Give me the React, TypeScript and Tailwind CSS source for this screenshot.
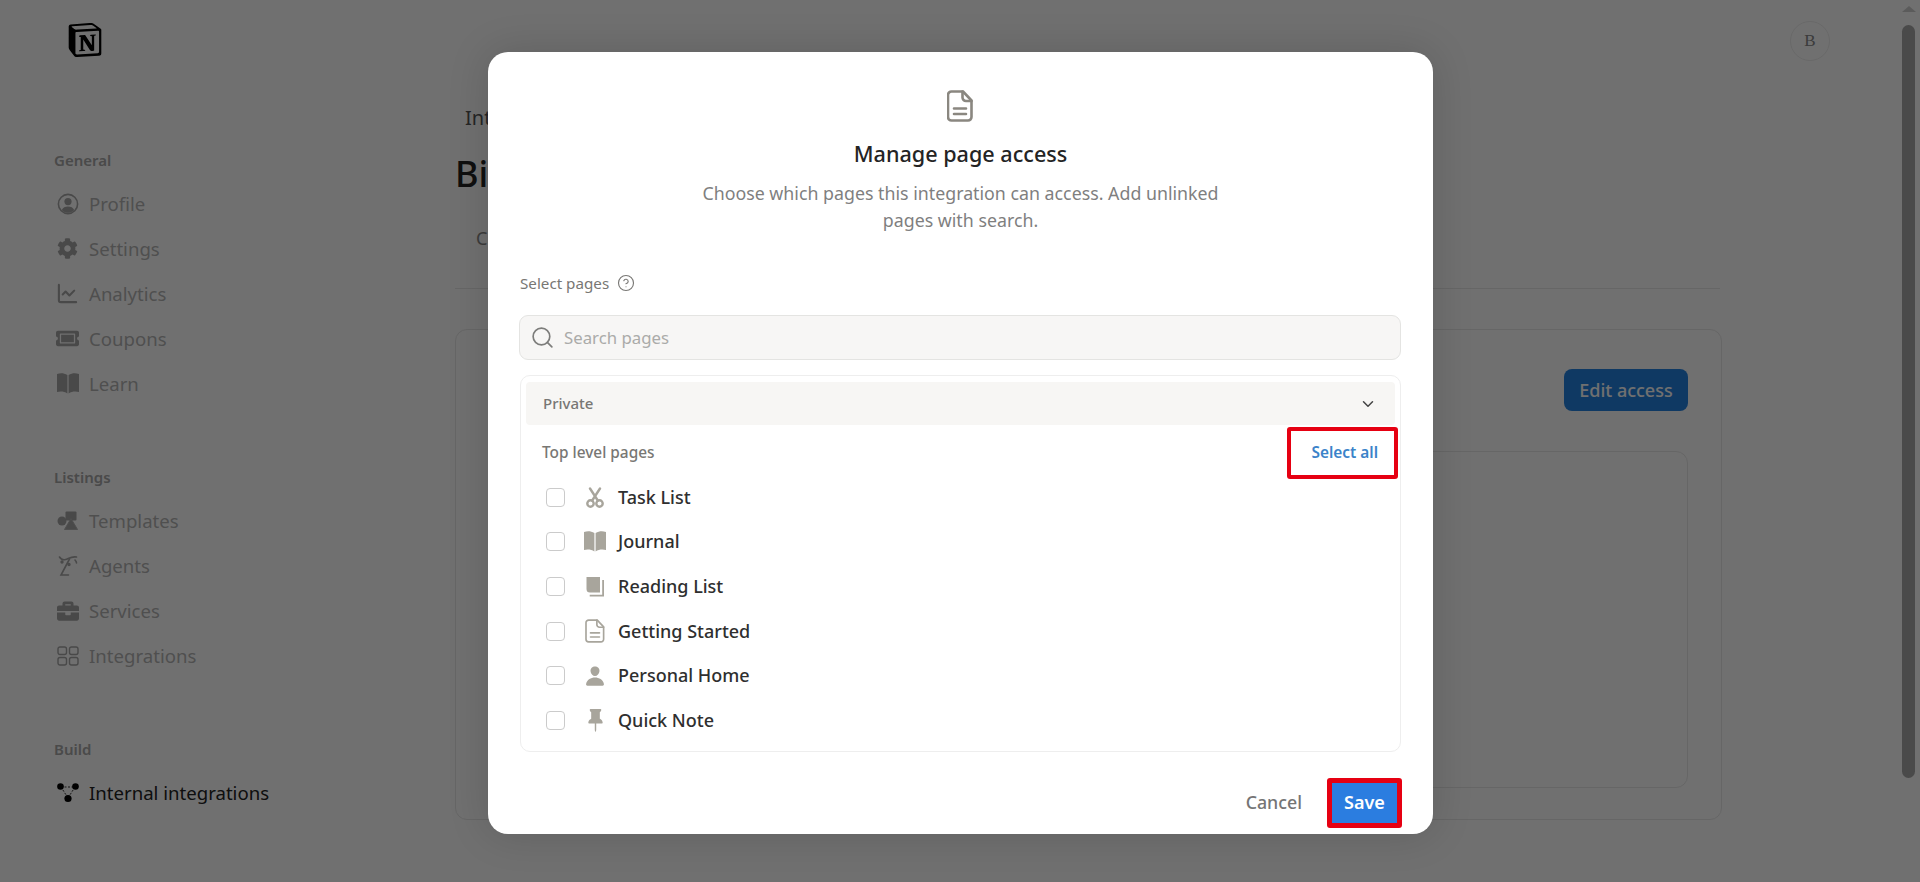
import React from 'react';
import { ChartLine, ChevronDown, CircleHelp, Search } from 'lucide-react';
import { FaBriefcase, FaCog, FaTicketAlt } from 'react-icons/fa';
import { IoPerson } from 'react-icons/io5';
import { BsPinFill } from 'react-icons/bs';
import { SiNotion } from 'react-icons/si';

function ProfileIcon() {
  return (
    <svg width="22" height="22" viewBox="0 0 22 22" fill="currentColor">
      <circle cx="11" cy="11" r="9.6" fill="none" stroke="currentColor" strokeWidth="1.6" />
      <circle cx="11" cy="8.6" r="3.6" />
      <path d="M4.8 17c1-2.6 3.4-3.6 6.2-3.6s5.200 1 6.200 3.600c-1.600 1.700-3.800 2.700-6.200 2.700s-4.600-1-6.200-2.700z" />
    </svg>
  );
}

function TemplatesIcon() {
  return (
    <svg width="22" height="22" viewBox="0 0 22 22" fill="currentColor">
      <circle cx="5" cy="11" r="4.500" />
      <rect x="8.500" y="1.500" width="11" height="9" rx="1" />
      <path d="M14 8.500 20.500 19.500h-13z" stroke="#b3b3b3" strokeWidth="1" />
    </svg>
  );
}

function AgentsIcon() {
  return (
    <svg width="22" height="24" viewBox="0 0 22 24" fill="none" stroke="currentColor" strokeWidth="1.600" strokeLinecap="round">
      <path d="M2.500 3c1.500 2.500 4 3 6 2.500 3-.8 6-3.500 11-2.500" />
      <path d="M12.500 5 4 21h7.500" />
      <circle cx="5" cy="8" r=".9" fill="currentColor" />
      <circle cx="12" cy="10.500" r=".9" fill="currentColor" />
      <path d="M18 6c1 1 1.500 2 1.500 3" />
    </svg>
  );
}

function IntegrationsIcon() {
  return (
    <svg width="22" height="20" viewBox="0 0 22 20" fill="none" stroke="currentColor" strokeWidth="1.400">
      <rect x="1" y="1" width="8.500" height="7.500" rx="2" />
      <rect x="12.500" y="1" width="8.500" height="7.500" rx="2" />
      <rect x="1" y="11.500" width="8.500" height="7.500" rx="2" />
      <rect x="12.500" y="11.500" width="8.500" height="7.500" rx="2" />
    </svg>
  );
}

function InternalIcon() {
  return (
    <svg width="22" height="20" viewBox="0 0 22 20" fill="currentColor">
      <path d="M4 4h14M4 4l7 11M18 4l-7 11" stroke="currentColor" strokeWidth=".8" strokeDasharray="2 1.500" />
      <circle cx="3.500" cy="3.500" r="3.300" />
      <circle cx="18.500" cy="3.500" r="3.300" />
      <circle cx="11" cy="15.500" r="3.600" />
    </svg>
  );
}

function DocIcon({ w, h, sw }: { w: number; h: number; sw: number }) {
  return (
    <svg width={w} height={h} viewBox="0 0 26 32" fill="none" stroke="currentColor" strokeWidth={sw} strokeLinejoin="round" strokeLinecap="round">
      <path d="M4.500 1.500h11.500l8.500 9v16.500a3.500 3.500 0 0 1-3.500 3.500h-16.500a3.500 3.500 0 0 1-3.500-3.500v-22a3.500 3.500 0 0 1 3.500-3.500z" />
      <path d="M15.500 1.500v6a3.500 3.500 0 0 0 3.500 3.500h5.500" />
      <path d="M7 18.500h12M7 24h12" />
    </svg>
  );
}

function BookIcon() {
  return (
    <svg width="22" height="21" viewBox="0 0 22 21" fill="currentColor">
      <path d="M0 1c3.500-1.200 7-1 10.400 1v18.500c-3-2-7-2.400-10.400-1.400z" />
      <path d="M22 1c-3.500-1.200-7-1-10.400 1v18.500c3-2 7-2.400 10.400-1.400z" />
    </svg>
  );
}

function ScissorsIcon() {
  return (
    <svg width="18" height="21" viewBox="0 0 18 21" fill="none" stroke="currentColor" strokeWidth="2.400" strokeLinecap="round">
      <circle cx="4.500" cy="16.500" r="3.200" />
      <circle cx="13.500" cy="16.500" r="3.200" />
      <path d="M4 1.500 11.800 13.500M14 1.500 6.200 13.500" />
    </svg>
  );
}

function ClosedBookIcon() {
  return (
    <svg width="20" height="20" viewBox="0 0 20 20" fill="currentColor">
      <path d="M1.500 0h13.500v15.500h-10a3.500 3.500 0 0 1-3.500-3.500z" />
      <path d="M17.200 3v14.700h-12.500v1.800h14.300v-16.500z" />
    </svg>
  );
}

const general = [
  { label: 'Profile', icon: <ProfileIcon /> },
  { label: 'Settings', icon: <FaCog size={21} /> },
  { label: 'Analytics', icon: <ChartLine size={23} strokeWidth={2.200} /> },
  { label: 'Coupons', icon: <FaTicketAlt size={23} /> },
  { label: 'Learn', icon: <BookIcon /> },
];

const listings = [
  { label: 'Templates', icon: <TemplatesIcon /> },
  { label: 'Agents', icon: <AgentsIcon /> },
  { label: 'Services', icon: <FaBriefcase size={22} /> },
  { label: 'Integrations', icon: <IntegrationsIcon /> },
];

const pages = [
  { label: 'Task List', icon: <ScissorsIcon /> },
  { label: 'Journal', icon: <BookIcon /> },
  { label: 'Reading List', icon: <ClosedBookIcon /> },
  { label: 'Getting Started', icon: <DocIcon w={20} h={24} sw={2.200} /> },
  { label: 'Personal Home', icon: <IoPerson size={22} /> },
  { label: 'Quick Note', icon: <BsPinFill size={23} /> },
];

function NavGroup({ title, items }: { title: string; items: { label: string; icon: React.ReactNode }[] }) {
  return (
    <div>
      <div className="h-[24px] text-[15px] leading-[24px] font-semibold text-[#a8a8a8]">{title}</div>
      <div className="mt-[9px] flex flex-col">
        {items.map((item) => (
          <div key={item.label} className="flex h-[45px] items-center text-[#a6a6a6]">
            <div className="flex w-[35px] justify-center pr-[10px] pl-[2px]">{item.icon}</div>
            <span className="text-[18.6px] text-[#b5b5b5]">{item.label}</span>
          </div>
        ))}
      </div>
    </div>
  );
}

function PageRow({ label, icon }: { label: string; icon: React.ReactNode }) {
  return (
    <div className="flex h-[44.67px] items-center">
      <div className="ml-[20px] h-[19px] w-[19px] rounded-[4px] border border-[#cbcbcb] bg-white" />
      <div className="ml-[18px] flex w-[24px] justify-center text-[#a8a59c]">{icon}</div>
      <span className="ml-[11px] text-[18px] font-medium text-[#2f2f2f]">{label}</span>
    </div>
  );
}

export default function App() {
  return (
    <div className="relative flex h-screen w-full overflow-hidden bg-white font-['Noto_Sans','Open_Sans',sans-serif]">
      {/* page behind the dialog */}
      <aside className="w-[455px] shrink-0 pl-[54px]">
        <div className="pt-[23px] pl-[14px] text-black">
          <SiNotion size={34} />
        </div>
        <div className="mt-[91px] flex flex-col gap-[59px]">
          <NavGroup title="General" items={general} />
          <NavGroup title="Listings" items={listings} />
          <div>
            <div className="h-[24px] text-[15px] leading-[24px] font-semibold text-[#a8a8a8]">Build</div>
            <div className="mt-[9px] flex h-[45px] items-center text-black">
              <div className="flex w-[35px] justify-center pr-[10px] pl-[2px]">
                <InternalIcon />
              </div>
              <span className="text-[18.6px] text-[#222222]">Internal integrations</span>
            </div>
          </div>
        </div>
      </aside>

      <main className="w-[267px] flex-1 pt-[104px]">
        <div className="pl-[10px] text-[20px] leading-[28px] text-[#555555]">Integrations</div>
        <div className="mt-[17px] text-[36px] leading-[50px] font-medium text-[#222222]">Bi</div>
        <div className="mt-[26px] flex h-[64px] w-[1265px] border-b border-[#e8e8e8] pl-[21px] text-[18px] text-[#888888]">C</div>
        <div className="mt-[40px] h-[491px] w-[1267px] rounded-[12px] border border-[#e8e8e8] px-[33px] pt-[39px]">
          <div className="flex justify-end">
            <div className="flex h-[42px] w-[124px] items-center justify-center rounded-[8px] bg-[#2383e2] text-[18px] font-medium text-white">
              Edit access
            </div>
          </div>
          <div className="mt-[40px] h-[337px] rounded-[12px] border border-[#e8e8e8]" />
        </div>
      </main>

      <div className="flex w-[197px] shrink-0 justify-between">
        <div className="mt-[21px] ml-[67px] flex h-[40px] w-[40px] items-center justify-center rounded-full border border-[#eeeeee] font-['Liberation_Serif',serif] text-[17px] text-[#888888]">
          B
        </div>
        <div className="mr-[5px] mb-[104px] flex w-[13px] flex-col items-center pt-[6px]">
          <div className="h-0 w-0 border-x-[7px] border-b-[6px] border-x-transparent border-b-[#d0d0d0]" />
          <div className="mt-[13px] h-[753px] w-[13px] rounded-full bg-[#a8a8a8]" />
        </div>
      </div>

      {/* dialog */}
      <div className="absolute inset-0 bg-black/[.56] pt-[52px] pl-[488px]">
        <div className="flex h-[782px] w-[945px] flex-col rounded-[20px] bg-white px-[32px] pt-[38px] shadow-[0_0_40px_rgba(0,0,0,0.15)]">
          <div className="flex flex-col items-center">
            <div className="-ml-[2px] text-[#8a8780]">
              <DocIcon w={26} h={32} sw={2.600} />
            </div>
            <h2 className="mt-[17px] text-[21.6px] leading-[30px] font-medium text-[#242424]">Manage page access</h2>
            <p className="mt-[11px] w-[560px] text-center text-[17.8px] leading-[27px] text-[#7f7f7f]">
              Choose which pages this integration can access. Add unlinked pages with search.
            </p>
          </div>

          <div className="mt-[37px] flex h-[24px] items-center">
            <span className="text-[15.2px] text-[#787774]">Select pages</span>
            <CircleHelp size={18} strokeWidth={1.500} className="ml-[8px] text-[#787774]" />
          </div>

          <div className="mt-[20px] -ml-[1px] flex h-[45px] items-center rounded-[9px] border border-[#e4e4e2] bg-[#f7f6f5] pl-[10px]">
            <Search size={25} strokeWidth={1.600} className="text-[#7d7d7b]" />
            <span className="ml-[9px] text-[16.8px] text-[#ababa9]">Search pages</span>
          </div>

          <div className="mt-[15px] h-[377px] rounded-[10px] border border-[#eeeeee] px-[5px] pt-[6px]">
            <div className="flex h-[43px] items-center justify-between rounded-[4px] bg-[#f7f6f4] pr-[18px] pl-[17px]">
              <span className="text-[15px] font-medium text-[#787774]">Private</span>
              <ChevronDown size={18} className="text-[#444444]" />
            </div>
            <div className="relative flex h-[50px] items-center justify-between pt-[6px] pr-[17px] pl-[16px]">
              <span className="text-[15.4px] font-medium text-[#787774]">Top level pages</span>
              <span className="text-[15.4px] font-semibold text-[#3a83c9]">Select all</span>
              <div className="absolute top-[2px] right-[-3px] h-[52px] w-[111px] rounded-[3px] border-[4px] border-[#e60012]" />
            </div>
            {pages.map((page) => (
              <PageRow key={page.label} label={page.label} icon={page.icon} />
            ))}
          </div>

          <div className="mt-[26px] -mr-[1px] flex items-center justify-end">
            <span className="mr-[25px] pb-[1px] text-[17.8px] font-medium text-[#757575]">Cancel</span>
            <div className="flex h-[50px] w-[75px] items-center justify-center rounded-[3px] border-[5px] border-[#e60012] bg-[#2b7de0] pb-[2px] text-[18px] font-semibold text-white">
              Save
            </div>
          </div>
        </div>
      </div>
    </div>
  );
}
